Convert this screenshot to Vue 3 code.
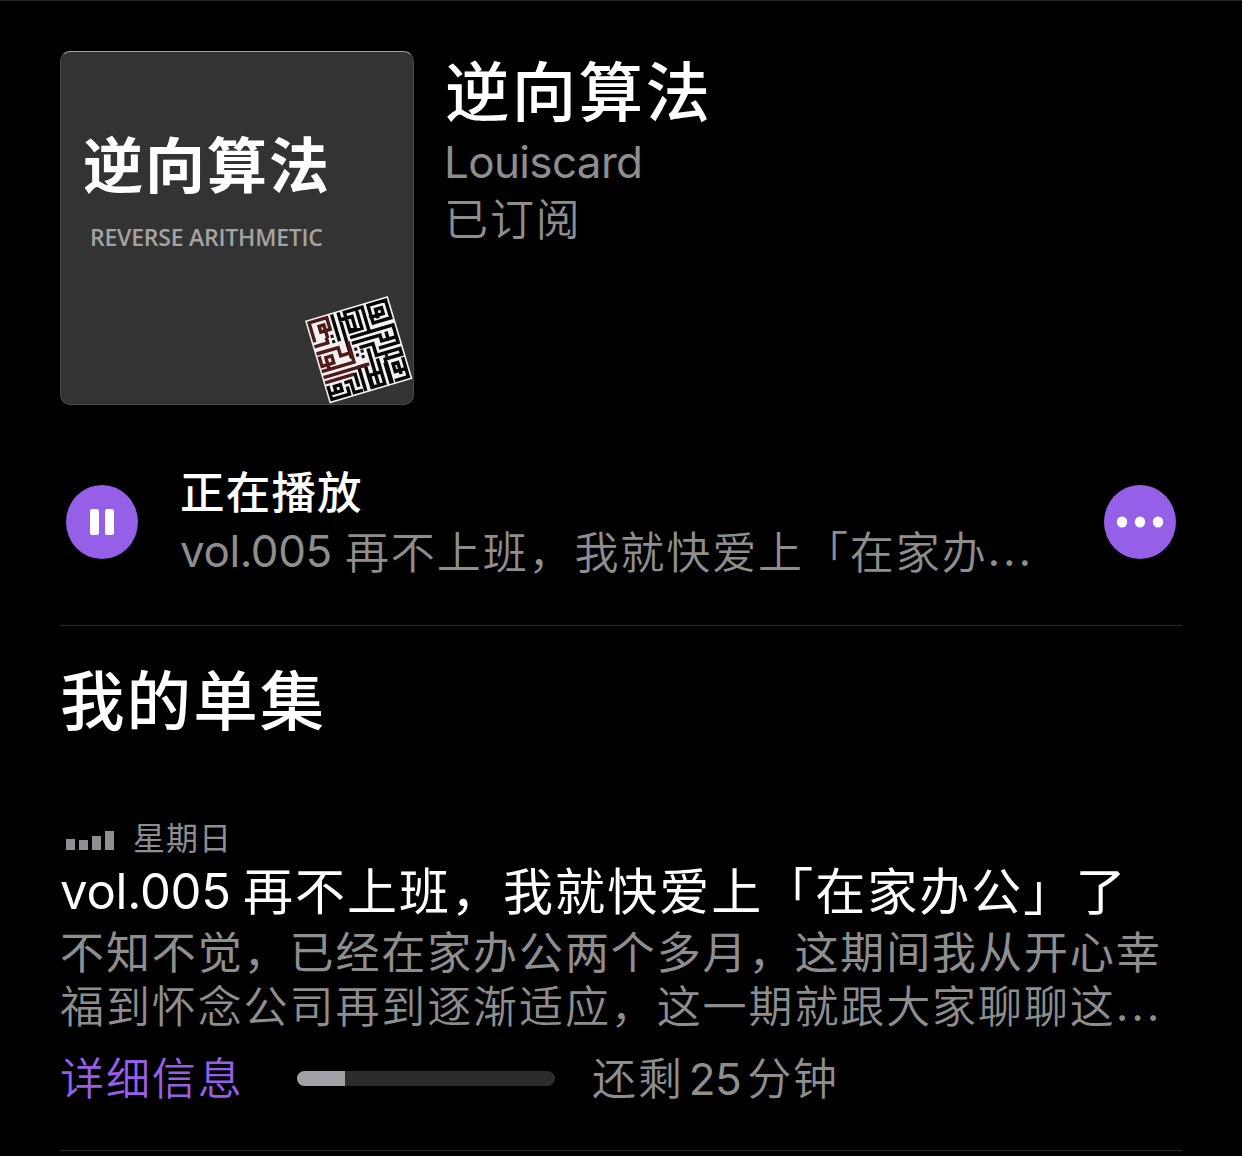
<script setup>
const episode = {
  day: '星期日',
  no: 'vol.005',
  title: '再不上班，我就快爱上「在家办公」了',
  lines: ['不知不觉，已经在家办公两个多月，这期间我从开心幸', '福到怀念公司再到逐渐适应，这一期就跟大家聊聊这'],
  progress: 18.5
}
const bars = [11, 10, 14, 19]
// Kufic square: centre lines of the strokes on a 14-by-14 lattice
const redLines = 'M0 3V0H3V2H1.4V1H2.2V3M0 4H2V3.4M0 5.2H3.4V6.6H5.2V5M0 6V7.4H2V6.2H1V8M0 8.2H5.2V7M0 9.2H7.2M0 10.1H4.4'
const blackLines = [
  'M3.9 0V4M5 0V7.2M5 1H7V3H6V0H8V3.3H6M8 0H9V4M10 3V0H13V3H10.5M11 2.2V1H12V2H10.4',
  'M6 4.2H13V6.2H11.6V5.2M6 5.2H10.5V6.2H13V7.2H10M7 6.2H9V8M8 7V12.8',
  'M9 6.2V8.2H13V9.2H10.2V13M9 9V13H6.8V9.2H5.7V13M7 13V11H9',
  'M13 10V13H11M12 12V10.3H11.2V11.6H12.6M10 10V13',
  'M0 11V13H3V12M1 12.1V11.1H2V12.1H0M3 11H3.8V13H5M4.8 10.2V12'
].join('')
const dots = [[6.1, 6.3], [7, 6.9], [6.1, 7.3], [6.9, 7.8], [3, 3.2], [3, 4.1], [9.9, 1.9], [10.6, 8.7]]
</script>

<template>
  <main class="page">
    <header class="show">
      <div class="cover">
        <div class="cover-title">逆向算法</div>
        <div class="cover-sub">REVERSE ARITHMETIC</div>
        <svg class="kufic" viewBox="0 0 124 120" width="124" height="120">
          <g transform="translate(9 30.7) rotate(-16.6) scale(2.98)">
            <rect width="29" height="29" fill="#f4f2f1" />
            <g transform="translate(1.1 1.1) scale(2.06)" fill="none" stroke-width=".56" stroke-linecap="square">
              <path :d="blackLines" stroke="#050505" />
              <path :d="redLines" stroke="#4f1a19" />
              <rect v-for="([x, y], i) in dots" :key="i" :x="x - .28" :y="y - .28" width=".5" height=".5" fill="#111" />
            </g>
          </g>
        </svg>
      </div>
      <div class="meta">
        <h1>逆向算法</h1>
        <div class="author">Louiscard</div>
        <div class="state cjk">已订阅</div>
      </div>
    </header>

    <section class="playing">
      <svg class="btn" viewBox="0 0 72 74" width="72" height="74">
        <ellipse cx="36" cy="37" rx="36" ry="37" />
        <rect x="24" y="24" width="9" height="26" rx="2.2" fill="#fff" />
        <rect x="39" y="24" width="9" height="26" rx="2.2" fill="#fff" />
      </svg>
      <div class="now">
        <div class="now-label">正在播放</div>
        <div class="now-title"><span class="lat">vol.005</span><span class="cjk">再不上班，我就快爱上「在家办</span><span class="dots">...</span></div>
      </div>
      <svg class="btn" viewBox="0 0 72 74" width="72" height="74">
        <ellipse cx="36" cy="37" rx="36" ry="37" />
        <ellipse v-for="x in [18, 36, 54]" :key="x" :cx="x" cy="37" rx="5.2" ry="5.6" fill="#fff" />
      </svg>
    </section>

    <h2>我的单集</h2>

    <article class="episode">
      <div class="date">
        <span class="bars"><i v-for="(h, i) in bars" :key="i" :style="{ height: h + 'px' }"></i></span>
        <span class="day">{{ episode.day }}</span>
      </div>
      <div class="ep-title"><span class="lat">{{ episode.no }}</span><span class="ep-cjk">{{ episode.title }}</span></div>
      <div class="desc cjk">{{ episode.lines[0] }}</div>
      <div class="desc"><span class="cjk">{{ episode.lines[1] }}</span><span class="dots">...</span></div>
      <div class="foot">
        <a class="cjk more">详细信息</a>
        <div class="track"><div class="fill" :style="{ width: episode.progress + '%' }"></div></div>
        <div class="left"><span class="cjk">还剩</span><span class="num">25</span><span class="cjk">分钟</span></div>
      </div>
    </article>
  </main>
</template>

<style>
body { background: #000; }
</style>

<style scoped>
.page {
  box-sizing: border-box;
  width: 1242px;
  height: 1156px;
  overflow: hidden;
  padding: 50px 60px 0;
  border-top: 1px solid #262628;
  background: #000;
  color: #fff;
  font-family: Inter, "Noto Sans CJK SC", sans-serif;
  font-size: 44px;
  white-space: nowrap;
}
h1, h2 { margin: 0; font-weight: 500; }
.cjk { font-family: "Noto Sans CJK SC", sans-serif; font-weight: 350; letter-spacing: 1.9px; }
.show { display: flex; height: 354px; }
.cover {
  position: relative;
  box-sizing: border-box;
  width: 354px;
  height: 354px;
  border: 1px solid #484848;
  border-top-color: #a0a0a0;
  border-radius: 10px;
  background: #333;
  overflow: hidden;
}
.cover-title { margin: 74px 0 0 22px; font: 700 60px/72px "Noto Sans CJK SC", sans-serif; letter-spacing: 2px; }
.cover-sub { margin: 24px 0 0 29px; color: #a3a3a3; font: 600 23px/30px "Open Sans", sans-serif; letter-spacing: -.22px; }
.kufic { position: absolute; left: 235px; top: 238px; }
.meta { margin-left: 31px; }
h1 { margin-top: 4px; font-size: 64.5px; line-height: 76px; letter-spacing: 2.3px; }
.author { margin: 3px 0 0 -1px; line-height: 56px; font-weight: 380; letter-spacing: -.65px; color: #8e8e8e; }
.state { margin: -1px 0 0 -1px; line-height: 56px; color: #8e8e8e; }
.playing {
  display: flex;
  align-items: center;
  height: 221px;
  box-sizing: border-box;
  padding: 14px 6px 0;
  border-bottom: 1px solid #2b2b2d;
}
.btn { fill: #955fe8; flex: none; }
.now { flex: 1; margin-left: 42px; }
.now-label { margin-top: -3px; font: 500 44.5px/58px "Noto Sans CJK SC", sans-serif; letter-spacing: 1.2px; }
.now-title { display: flex; margin-top: 2px; line-height: 58px; color: #8e8e8e; font-weight: 380; }
.lat { margin-right: 13px; font-weight: inherit; letter-spacing: -.4px; }
.now-title .lat { padding-top: 1px; }
.dots { letter-spacing: 2.8px; }
h2 { margin-top: 36px; font-size: 64.5px; line-height: 80px; letter-spacing: 2.1px; }
.episode { margin-top: 72px; height: 337px; box-sizing: border-box; border-bottom: 1px solid #2b2b2d; }
.date { display: flex; align-items: center; height: 46px; color: #8e8e93; }
.bars { display: flex; align-items: flex-end; gap: 4px; height: 20px; margin: 5px 0 0 6px; }
.bars i { width: 9px; background: #8e8e93; }
.day { margin: -2px 0 0 19px; font: 400 32px/46px "Noto Sans CJK SC", sans-serif; letter-spacing: 1px; }
.ep-title { display: flex; height: 64px; margin-top: -1px; line-height: 58px; font-size: 49px; }
.ep-title .lat { margin-right: 12px; padding-top: 4px; letter-spacing: -.2px; }
.ep-cjk { font-family: "Noto Sans CJK SC", sans-serif; font-size: 50px; letter-spacing: 2.03px; }
.desc { display: flex; height: 54px; line-height: 54px; color: #8e8e8e; font-weight: 380; }
.desc .dots { padding-top: 1px; }
.foot { display: flex; align-items: center; height: 90px; padding-top: 2px; }
.more { width: 237px; margin-top: -5px; color: #955fe8; }
.track { width: 258px; height: 15px; border-radius: 8px; background: #2c2c2e; overflow: hidden; }
.fill { height: 100%; background: #a1a1a6; }
.left { display: flex; align-items: baseline; margin: -5px 0 0 37px; color: #8e8e8e; font-weight: 380; }
.num { margin: 0 6px 0 5px; letter-spacing: -.6px; }
</style>
